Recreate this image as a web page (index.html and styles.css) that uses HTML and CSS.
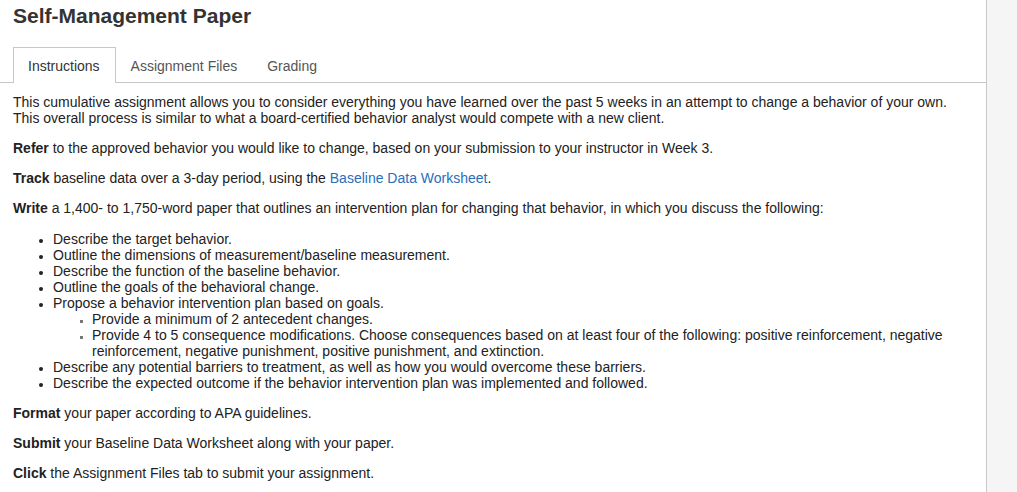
FILE: index.html
```html
<!DOCTYPE html>
<html lang="en">
<head>
    <meta charset="UTF-8">
    <meta name="viewport" content="width=device-width, initial-scale=1.0">
    <title>Self-Management Paper</title>
    <link rel="stylesheet" href="styles.css">
</head>
<body>
    <div class="page">
        <div class="main">
            <h1 class="title">Self-Management Paper</h1>

            <ul class="tabs">
                <li class="tab active">Instructions</li>
                <li class="tab">Assignment Files</li>
                <li class="tab">Grading</li>
            </ul>

            <div class="content">
                <p>This cumulative assignment allows you to consider everything you have learned over the past 5 weeks in an attempt to change a behavior of your own. This overall process is similar to what a board-certified behavior analyst would compete with a new client.</p>
                <p><b>Refer</b> to the approved behavior you would like to change, based on your submission to your instructor in Week 3.</p>
                <p><b>Track</b> baseline data over a 3-day period, using the <a href="#">Baseline Data Worksheet</a>.</p>
                <p><b>Write</b> a 1,400- to 1,750-word paper that outlines an intervention plan for changing that behavior, in which you discuss the following:</p>
                <ul class="points">
                    <li>Describe the target behavior.</li>
                    <li>Outline the dimensions of measurement/baseline measurement.</li>
                    <li>Describe the function of the baseline behavior.</li>
                    <li>Outline the goals of the behavioral change.</li>
                    <li>Propose a behavior intervention plan based on goals.
                        <ul class="subpoints">
                            <li>Provide a minimum of 2 antecedent changes.</li>
                            <li>Provide 4 to 5 consequence modifications. Choose consequences based on at least four of the following: positive reinforcement, negative reinforcement, negative punishment, positive punishment, and extinction.</li>
                        </ul>
                    </li>
                    <li>Describe any potential barriers to treatment, as well as how you would overcome these barriers.</li>
                    <li>Describe the expected outcome if the behavior intervention plan was implemented and followed.</li>
                </ul>
                <p><b>Format</b> your paper according to APA guidelines.</p>
                <p><b>Submit</b> your Baseline Data Worksheet along with your paper.</p>
                <p><b>Click</b> the Assignment Files tab to submit your assignment.</p>
            </div>
        </div>
        <div class="side"></div>
    </div>
</body>
</html>
```

FILE: styles.css
```css
body {
    margin: 0;
    font-family: "Liberation Sans", Arial, sans-serif;
    font-size: 14px;
    color: #222;
    background-color: #fff;
}
.page {
    display: flex;
    min-height: 492px;
}
.main {
    width: 986px;
    border-right: 1px solid #c8c8c8;
}
.side {
    flex: 1;
    background-color: #f5f5f5;
}
.title {
    margin: 0;
    padding: 4px 13px 0;
    font-size: 21px;
    line-height: 24px;
    color: #333;
}
.tabs {
    display: flex;
    list-style: none;
    margin: 19px 0 0;
    padding: 0 13px;
    border-bottom: 1px solid #c8c8c8;
}
.tab {
    padding: 0 14px;
    height: 34px;
    line-height: 36px;
    font-size: 14px;
    color: #555;
    border: 1px solid transparent;
    border-bottom: none;
    margin-bottom: -1px;
}
.tab:first-child {
    padding-right: 15px;
}
.tab.active {
    border-color: #c8c8c8;
    background-color: #fff;
    height: 35px;
    color: #333;
}
.content {
    padding: 11px 13px 0;
    line-height: 16px;
}
.content p {
    margin: 0 0 14px;
}
.content p:nth-child(4) {
    margin-bottom: 15px;
}
.content a {
    color: #2a6ebb;
    text-decoration: none;
}
.points {
    margin: 0 0 14px;
    padding-left: 40px;
}
.points li::marker {
    font-size: 12px;
}
.subpoints {
    list-style: square;
    margin: 0;
    padding-left: 39px;
}
.subpoints li::marker {
    font-size: 9px;
    color: #777;
}
```
